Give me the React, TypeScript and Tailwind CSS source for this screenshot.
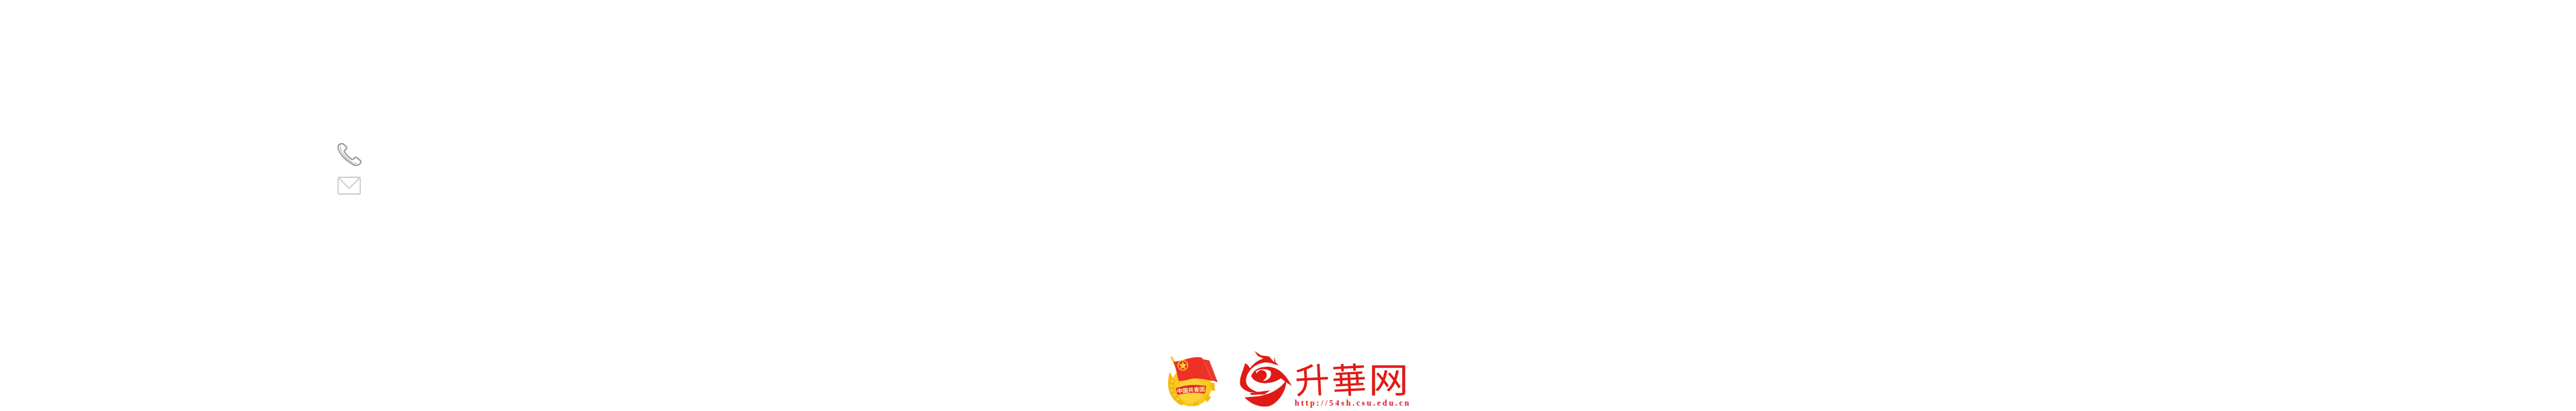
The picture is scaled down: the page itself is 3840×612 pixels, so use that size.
import React from "react";

function PhoneIcon() {
  return (
    <svg width="38" height="36" viewBox="0 0 38 36" fill="none">
      <path
        d="M4 1.500C2 2.500 .8 4.500 1 7c.5 4 3 8.500 7 13 4.500 4.800 10 9 15 12 2.500 1.300 5.500 1.500 8 .5 2-.8 3.800-2.800 4-4.500.1-1-.5-1.800-1.300-2.400l-5.200-4c-1-.7-2-.6-2.800.2l-1.700 2c-.8.8-1.800.9-2.800.3-2.800-1.800-5.500-4-7.700-6.700-1.300-1.500-2.300-3-3-4.500-.4-1-.2-1.900.6-2.500l1.900-1.500c.9-.8 1.100-1.800.6-2.800L10 2.500C9 .8 6 .4 4 1.500Z"
        stroke="#999999"
        strokeWidth="2"
      />
      <path d="M5 4.500C3.800 6.500 4.500 9.500 6.300 12.500c3 5.500 9 12 15.700 16.300 2 1.200 4.500 1.500 6.500 1" stroke="#b5b5b5" strokeWidth="1.200" />
    </svg>
  );
}

function MailIcon() {
  return (
    <svg width="36" height="27" viewBox="0 0 36 27" fill="none">
      <rect x="1" y="1" width="33" height="25" rx="2" stroke="#cdcdcd" strokeWidth="1.800" />
      <path d="M2 2l15.500 15.500L33 2" stroke="#cdcdcd" strokeWidth="1.800" />
    </svg>
  );
}

function Emblem() {
  return (
    <svg width="110" height="102" viewBox="0 0 330 306">
      {/* wheat + gear */}
      <circle cx="168" cy="195" r="90" fill="#f8c91f" />
      <path d="M64 170c-4 40 12 88 62 112l10-14c-30-20-46-50-44-96l-20-40c-4 10-6 26-8 38Z" fill="#f2b911" />
      <path d="M76 170l10 6M70 192l14 4M74 216l14-2M84 238l14-6M100 258l12-10" stroke="#fbe27a" strokeWidth="4" />
      <path d="M252 180h18l4 34-16 2ZM240 232l16 14-16 20-14-14ZM196 262l6 18-24 4-2-18Z" fill="#f2b911" />
      <circle cx="166" cy="214" r="56" fill="#fad23a" />
      {/* flag */}
      <path d="M74 66l8-4 36 72-8 4Z" fill="#f2c230" />
      <path d="M218 74l30 6 38 98-22-8Z" fill="#e8392a" />
      <path d="M88 86c45-2 90-30 128-18 14 30 32 72 50 104-35-6-70-18-105-8-18 5-35 8-50 8C104 140 98 112 88 86Z" fill="#ee3124" />
      <circle cx="130" cy="102" r="22" fill="none" stroke="#f8cf35" strokeWidth="4" />
      <path d="M130 84l5 13h14l-11 9 4 14-12-8-12 8 4-14-11-9h14Z" fill="#f8cf35" />
      {/* ribbon */}
      <path d="M98 204c45-16 92-18 136-10l-6 34c-40-6-84-4-122 6Z" fill="#e02a1e" />
      <text
        x="166"
        y="222"
        textAnchor="middle"
        fontSize="25"
        fontWeight="700"
        fill="#fdeeb5"
        fontFamily='"Noto Sans CJK SC", sans-serif'
        transform="rotate(-4 166 215)"
      >
        中国共青团
      </text>
    </svg>
  );
}

function Dragon() {
  return (
    <svg width="100" height="102" viewBox="0 0 300 306" fill="#e01a16">
      {/* head and left of the body */}
      <path d="M78 92L90 100 100 115C115 95 135 78 160 72L135 60 120 38 150 58 185 62 205 85 228 103 195 92C170 85 140 90 115 110 95 125 82 150 82 170 82 195 105 215 150 225L100 222C75 215 55 200 55 180 55 150 70 125 78 92Z" />
      <path d="M210 64l4 24 12 12-14-4-4-14Z" />
      {/* arc over the eye */}
      <path d="M105 150C115 125 135 110 175 108 215 108 255 130 287 195 265 180 250 170 238 160 225 172 195 182 165 182 135 180 115 170 105 150Z" />
      <path d="M126 128C142 116 175 116 192 128 200 150 185 168 160 172 170 160 128 150 126 128Z" fill="#fff" />
      <circle cx="152" cy="146" r="23" />
      {/* lower part */}
      <path d="M75 245L140 240C190 230 235 210 262 168 265 215 225 270 190 283 150 295 105 275 75 245Z" />
      <path d="M100 226L190 214 165 232 105 234Z" />
    </svg>
  );
}

export default function App() {
  return (
    <div className="flex h-[612px] w-full flex-col bg-white font-['Liberation_Sans',sans-serif]">
      <div className="flex flex-col items-start gap-[14px] pl-[503px] pt-[213px]">
        <PhoneIcon />
        <MailIcon />
      </div>
      <div className="mt-auto flex h-[102px] justify-center">
        <Emblem />
        <Dragon />
        <div className="w-[190px] pt-[26px] text-[#e01a16]">
          <div className="flex h-[54px] items-center font-['Noto_Sans_CJK_SC',sans-serif] text-[52px] leading-none">
            <span className="w-[55px] -rotate-3">升</span>
            <span className="w-[55px] -rotate-3">華</span>
            <span className="origin-left scale-x-115">网</span>
          </div>
          <div className="mt-[3px] font-['Liberation_Serif',serif] text-[12px] leading-[14px] font-bold tracking-[2.800px]">
            http://54sh.csu.edu.cn
          </div>
        </div>
      </div>
    </div>
  );
}
